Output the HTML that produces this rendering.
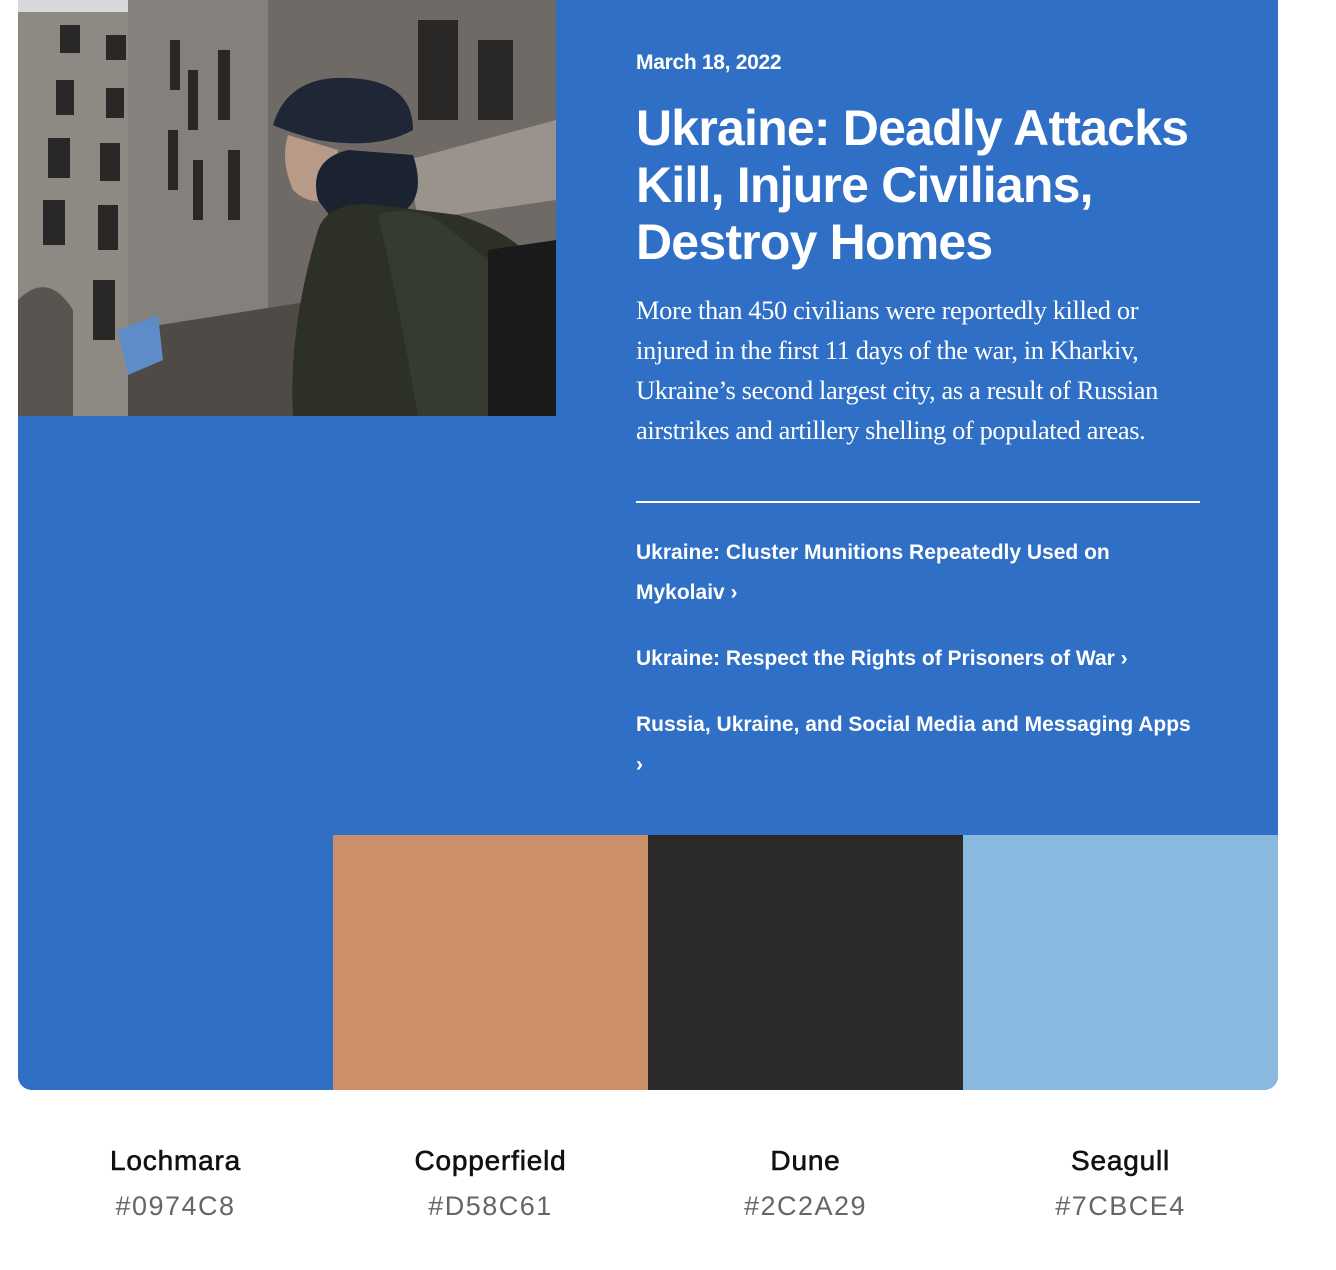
<!DOCTYPE html>
<html><head><meta charset="utf-8"><style>
body{margin:0;background:#fff;width:1336px;height:1270px;overflow:hidden;font-family:"Liberation Sans",sans-serif}
.card{position:absolute;left:18px;top:0;width:1260px;height:1090px;background:#306fc6;border-radius:0 0 14px 14px;overflow:hidden}
.img{position:absolute;left:0;top:0;width:538px;height:416px}
.txt{position:absolute;left:618px;top:0;width:580px;color:#fff}
.date{position:absolute;top:51px;font-weight:bold;font-size:21px;letter-spacing:-0.3px}
h1{position:absolute;top:100px;margin:0;font-size:50px;line-height:57px;font-weight:bold;letter-spacing:-0.8px;width:590px}
p{position:absolute;top:290px;margin:0;font-family:"Liberation Serif",serif;font-size:26.5px;line-height:40px;width:565px;letter-spacing:-0.4px}
.rule{position:absolute;top:501px;left:0;width:564px;height:1.5px;background:#fff}
.links{position:absolute;top:533px;font-weight:bold;font-size:21px;line-height:40px;width:600px;letter-spacing:0px}
.links div{margin-bottom:26px}
.sw{position:absolute;top:835px;height:255px;width:315px}
.lab{position:absolute;top:1145px;width:315px;text-align:center}
.lab b{display:block;font-weight:normal;color:#111;height:46px;-webkit-text-stroke:0.6px #111;font-size:28px;letter-spacing:0.8px}
.lab span{color:#666;font-size:27px;letter-spacing:1.5px}
</style></head><body>
<div class="card">
<svg class="img" viewBox="0 0 538 416" preserveAspectRatio="none">
<rect width="538" height="416" fill="#7e7873"/>
<rect x="0" y="0" width="120" height="416" fill="#8f8984"/>
<rect x="0" y="0" width="120" height="12" fill="#d8d8d8"/>
<polygon points="110,0 300,0 300,416 110,416" fill="#85807b"/>
<polygon points="250,0 538,0 538,416 250,416" fill="#6f6a66"/>
<g fill="#2a2826">
<rect x="42" y="25" width="20" height="28"/><rect x="88" y="35" width="20" height="25"/>
<rect x="38" y="80" width="18" height="35"/><rect x="88" y="88" width="18" height="30"/>
<rect x="30" y="138" width="22" height="40"/><rect x="82" y="143" width="20" height="38"/>
<rect x="25" y="200" width="22" height="45"/><rect x="80" y="205" width="20" height="45"/>
<rect x="152" y="40" width="10" height="50"/><rect x="170" y="70" width="10" height="60"/><rect x="200" y="50" width="12" height="70"/>
<rect x="150" y="130" width="10" height="60"/><rect x="175" y="160" width="10" height="60"/><rect x="210" y="150" width="12" height="70"/>
<rect x="400" y="20" width="40" height="100"/><rect x="460" y="40" width="35" height="80"/>
<rect x="75" y="280" width="22" height="60"/>
</g>
<path d="M0 300 Q30 270 55 310 L55 416 L0 416Z" fill="#5a5450"/>
<polygon points="110,330 300,300 300,416 110,416" fill="#4e4a46"/>
<polygon points="100,330 140,315 145,360 110,375" fill="#5d8cc8"/>
<polygon points="390,160 538,120 538,200 400,220" fill="#9a938c"/>
<path d="M255 125 Q270 75 330 78 Q395 80 395 130 Q360 150 300 140 Q270 132 255 125Z" fill="#1f2636"/>
<path d="M270 135 Q262 160 275 190 Q290 205 310 200 L320 150Z" fill="#b89a88"/>
<path d="M300 200 Q290 160 330 150 L395 155 Q410 200 380 215 L330 240Z" fill="#1b2230"/>
<path d="M300 230 Q310 200 360 205 L440 215 Q520 240 538 300 L538 416 L275 416 Q270 330 300 230Z" fill="#2c3027"/>
<path d="M360 215 Q390 205 420 220 L470 260 L470 416 L400 416 Q380 300 360 215Z" fill="#363b31"/>
<path d="M470 250 L538 240 L538 416 L470 416Z" fill="#1a1a1a"/>
</svg>
<div class="txt">
<div class="date">March 18, 2022</div>
<h1>Ukraine: Deadly Attacks Kill, Injure Civilians, Destroy Homes</h1>
<p>More than 450 civilians were reportedly killed or injured in the first 11 days of the war, in Kharkiv, Ukraine’s second largest city, as a result of Russian airstrikes and artillery shelling of populated areas.</p>
<div class="rule"></div>
<div class="links">
<div>Ukraine: Cluster Munitions Repeatedly Used on<br>Mykolaiv ›</div>
<div>Ukraine: Respect the Rights of Prisoners of War ›</div>
<div>Russia, Ukraine, and Social Media and Messaging Apps<br>›</div>
</div>
</div>
<div class="sw" style="left:0;background:#306fc6"></div>
<div class="sw" style="left:315px;background:#cb8f6a"></div>
<div class="sw" style="left:630px;background:#2c2a29"></div>
<div class="sw" style="left:945px;background:#8ab9e0"></div>
</div>
<div class="lab" style="left:18px"><b>Lochmara</b><span>#0974C8</span></div>
<div class="lab" style="left:333px"><b>Copperfield</b><span>#D58C61</span></div>
<div class="lab" style="left:648px"><b>Dune</b><span>#2C2A29</span></div>
<div class="lab" style="left:963px"><b>Seagull</b><span>#7CBCE4</span></div>
</body></html>
